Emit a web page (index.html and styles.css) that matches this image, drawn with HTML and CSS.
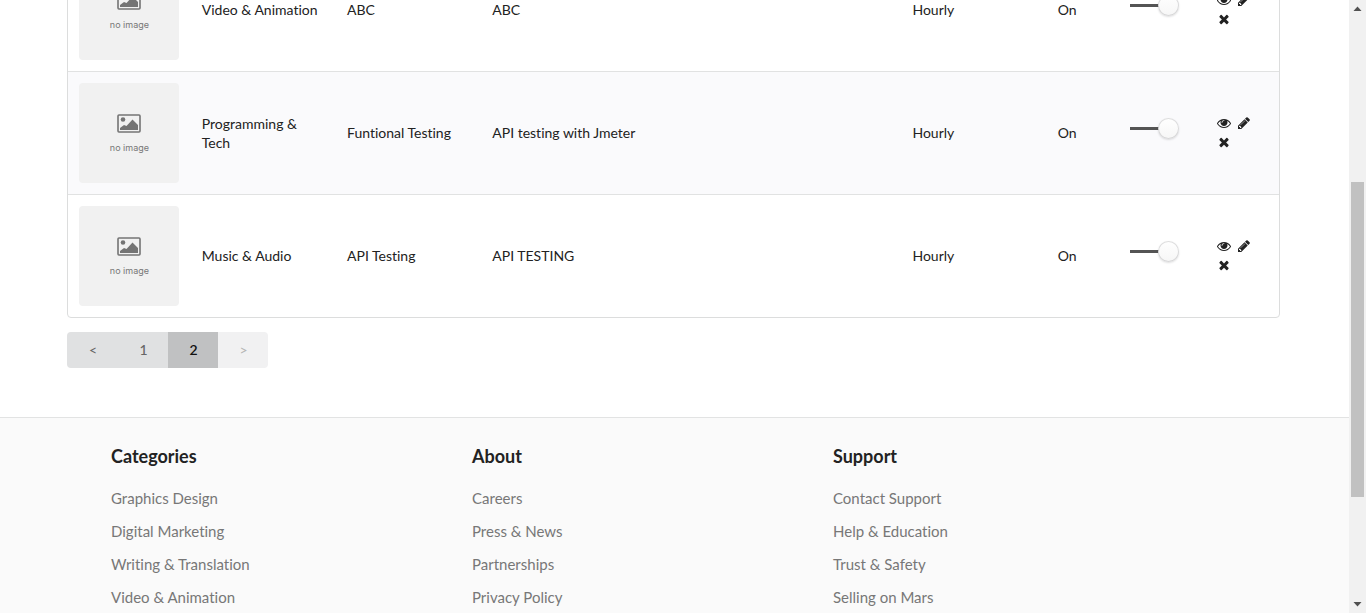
FILE: index.html
```html
<!DOCTYPE html>
<html lang="en">
<head>
<meta charset="utf-8">
<title>Manage Listings</title>
<link rel="stylesheet" href="styles.css">
</head>
<body>
<svg class="sprite" aria-hidden="true">
  <symbol id="eye" viewBox="0 0 1792 1792"><path d="M1664 960q-152-236-381-353 61 104 61 225 0 185-131.500 316.500t-316.500 131.500-316.500-131.500-131.500-316.500q0-121 61-225-229 117-381 353 133 205 333.500 326.500t434.500 121.500 434.500-121.500 333.500-326.500zm-720-384q0-20-14-34t-34-14q-125 0-214.500 89.500t-89.500 214.500q0 20 14 34t34 14 34-14 14-34q0-86 61-147t147-61q20 0 34-14t14-34zm848 384q0 34-20 69-140 230-376.500 368.500t-499.500 138.500-499.500-139-376.500-368q-20-35-20-69t20-69q140-229 376.500-368t499.500-139 499.500 139 376.500 368q20 35 20 69z"/></symbol>
  <symbol id="pencil" viewBox="0 0 1792 1792"><path d="M491 1536l91-91-235-235-91 91v107h128v128h107zm523-928q0-22-22-22-10 0-17 7l-542 542q-7 7-7 17 0 22 22 22 10 0 17-7l542-542q7-7 7-17zm-54-192l416 416-832 832h-416v-416zm683 96q0 53-37 90l-166 166-416-416 166-165q36-38 90-38 53 0 91 38l235 234q37 39 37 91z"/></symbol>
  <symbol id="times" viewBox="0 0 1792 1792"><path d="M1490 1322q0 40-28 68l-136 136q-28 28-68 28t-68-28l-294-294-294 294q-28 28-68 28t-68-28l-136-136q-28-28-28-68t28-68l294-294-294-294q-28-28-28-68t28-68l136-136q28-28 68-28t68 28l294 294 294-294q28-28 68-28t68 28l136 136q28 28 28 68t-28 68l-294 294 294 294q28 28 28 68z"/></symbol>
  <symbol id="picture" viewBox="0 0 24 19"><rect x="1" y="1" width="22" height="17" rx="1" fill="none" stroke="currentColor" stroke-width="1.600"/><circle cx="6" cy="5.500" r="2.300"/><path d="M3 16v-2l4-3 2.500 1L15.500 5.500 21 11v5z"/></symbol>
</svg>
<div class="window">
  <div class="page">
    <main class="content">
      <table class="listings">
        <colgroup><col class="col-image"><col class="col-category"><col class="col-title"><col class="col-description"><col class="col-type"><col class="col-trade"><col class="col-active"><col class="col-actions"></colgroup>
        <tbody>
          <tr>
            <td><div class="thumb"><svg class="thumb-icon"><use href="#picture"/></svg><span>no image</span></div></td>
            <td>Video &amp; Animation</td><td>ABC</td><td>ABC</td><td>Hourly</td><td>On</td>
            <td><input class="toggle" type="checkbox" role="switch" aria-label="Active: ABC" checked></td>
            <td><div class="actions"><button aria-label="View"><svg><use href="#eye"/></svg></button><button aria-label="Edit"><svg><use href="#pencil"/></svg></button><button aria-label="Delete"><svg><use href="#times"/></svg></button></div></td>
          </tr>
          <tr>
            <td><div class="thumb"><svg class="thumb-icon"><use href="#picture"/></svg><span>no image</span></div></td>
            <td>Programming &amp; Tech</td><td>Funtional Testing</td><td>API testing with Jmeter</td><td>Hourly</td><td>On</td>
            <td><input class="toggle" type="checkbox" role="switch" aria-label="Active: Funtional Testing" checked></td>
            <td><div class="actions"><button aria-label="View"><svg><use href="#eye"/></svg></button><button aria-label="Edit"><svg><use href="#pencil"/></svg></button><button aria-label="Delete"><svg><use href="#times"/></svg></button></div></td>
          </tr>
          <tr>
            <td><div class="thumb"><svg class="thumb-icon"><use href="#picture"/></svg><span>no image</span></div></td>
            <td>Music &amp; Audio</td><td>API Testing</td><td>API TESTING</td><td>Hourly</td><td>On</td>
            <td><input class="toggle" type="checkbox" role="switch" aria-label="Active: API Testing" checked></td>
            <td><div class="actions"><button aria-label="View"><svg><use href="#eye"/></svg></button><button aria-label="Edit"><svg><use href="#pencil"/></svg></button><button aria-label="Delete"><svg><use href="#times"/></svg></button></div></td>
          </tr>
        </tbody>
      </table>
      <nav class="pagination" aria-label="Pages">
        <button>&lt;</button><button>1</button><button class="current" aria-current="page">2</button><button disabled>&gt;</button>
      </nav>
    </main>
    <footer class="footer">
      <section>
        <h3>Categories</h3>
        <ul>
          <li><a href="#">Graphics Design</a></li>
          <li><a href="#">Digital Marketing</a></li>
          <li><a href="#">Writing &amp; Translation</a></li>
          <li><a href="#">Video &amp; Animation</a></li>
        </ul>
      </section>
      <section>
        <h3>About</h3>
        <ul>
          <li><a href="#">Careers</a></li>
          <li><a href="#">Press &amp; News</a></li>
          <li><a href="#">Partnerships</a></li>
          <li><a href="#">Privacy Policy</a></li>
        </ul>
      </section>
      <section>
        <h3>Support</h3>
        <ul>
          <li><a href="#">Contact Support</a></li>
          <li><a href="#">Help &amp; Education</a></li>
          <li><a href="#">Trust &amp; Safety</a></li>
          <li><a href="#">Selling on Mars</a></li>
        </ul>
      </section>
    </footer>
  </div>
  <div class="scrollbar" aria-hidden="true">
    <svg viewBox="0 0 17 17"><path d="M4.500 11h8L8.500 6.500z"/></svg>
    <div class="track"><div class="before"></div><div class="handle"></div><div class="after"></div></div>
    <svg viewBox="0 0 17 17"><path d="M4.500 6h8l-4 4.500z"/></svg>
  </div>
</div>
</body>
</html>
```
FILE: styles.css
```css
* { box-sizing: border-box; }

body {
  margin: 0;
  background: #fff;
  color: #222;
  font: 14px/19px Lato, "Liberation Sans", sans-serif;
  font-variant-ligatures: none;
}

button { font: inherit; border: 0; padding: 0; cursor: pointer; }

.sprite { display: block; width: 0; height: 0; }

.window { display: flex; height: 100vh; overflow: hidden; }

.page { flex: 1; display: flex; flex-direction: column; overflow: hidden; }

/* The first row is partly scrolled out of view. */
.content { margin: -52px 5.1% 49px 5%; }

.listings {
  width: 100%;
  table-layout: fixed;
  border: 1px solid #dcdddd;
  border-radius: 4px;
  border-collapse: separate;
  border-spacing: 0;
}
.listings td { padding: 11px; vertical-align: middle; }
.listings td + td { padding-bottom: 12px; }
.listings tr + tr td { border-top: 1px solid #e1e2e2; }
.listings tr:nth-child(even) { background: #fafafc; }

.col-image { width: 10.1%; }
.col-category { width: 12%; }
.col-title { width: 12%; }
.col-description { width: 34.7%; }
.col-type { width: 12%; }
.col-trade { width: 6%; }
.col-active { width: 7.1%; }
.col-actions { width: 6.1%; }

.thumb {
  display: flex;
  flex-direction: column;
  align-items: center;
  justify-content: center;
  gap: 9px;
  width: 100px;
  height: 100px;
  padding-top: 2px;
  border-radius: 4px;
  background: #f1f1f1;
  color: #777;
  font: 9px/12px Inter, "Liberation Sans", sans-serif;
}
.thumb-icon { width: 24px; height: 19px; fill: currentColor; color: #747474; }

.toggle {
  appearance: none;
  display: flex;
  justify-content: flex-end;
  width: 49px;
  height: 21px;
  margin: 0 0 8px;
  background: linear-gradient(#545454, #545454) left center / 32px 3px no-repeat;
}
.toggle::before {
  content: "";
  width: 21px;
  height: 21px;
  border-radius: 50%;
  background: linear-gradient(#fff, #f6f6f6);
  box-shadow: 0 1px 2px rgba(34, 36, 38, .15), inset 0 0 0 1px rgba(34, 36, 38, .15);
}

.actions { display: flex; flex-wrap: wrap; column-gap: 4px; }
.actions button { display: flex; align-items: center; justify-content: center; width: 16px; height: 19px; background: none; }
.actions svg { width: 14px; height: 14px; fill: #222; }

.pagination { display: flex; margin-top: 14px; }
.pagination button {
  width: 50px;
  height: 36px;
  padding-bottom: 2px;
  background: #e0e1e2;
  color: #666;
  font-weight: 500;
}
.pagination button:first-child { width: 51px; border-radius: 4px 0 0 4px; }
.pagination button:last-child { border-radius: 0 4px 4px 0; }
.pagination .current { background: #c0c1c2; color: #111; font-weight: 600; }
.pagination button:disabled { background: #f1f1f2; color: #b5b5b5; }

.footer {
  flex: 1;
  display: grid;
  grid-template-columns: repeat(3, minmax(0, 361px));
  align-content: start;
  padding: 27px 0 0 111px;
  border-top: 1px solid #e2e3e3;
  background: #fafafa;
}
.footer h3 { margin: 0 0 15px; font-size: 18px; line-height: 22px; font-weight: 700; }
.footer ul { margin: 0; padding: 0; list-style: none; }
.footer li { font-size: 15px; line-height: 33px; }
.footer a { color: #777; text-decoration: none; }

.scrollbar { display: flex; flex-direction: column; width: 17px; background: #f1f1f1; }
.scrollbar svg { width: 17px; height: 17px; fill: #505050; }
.track { flex: 1; display: flex; flex-direction: column; padding: 0 2px; }
.before { flex: 165; }
.handle { flex: 315; background: #c1c1c1; }
.after { flex: 99; }
```
